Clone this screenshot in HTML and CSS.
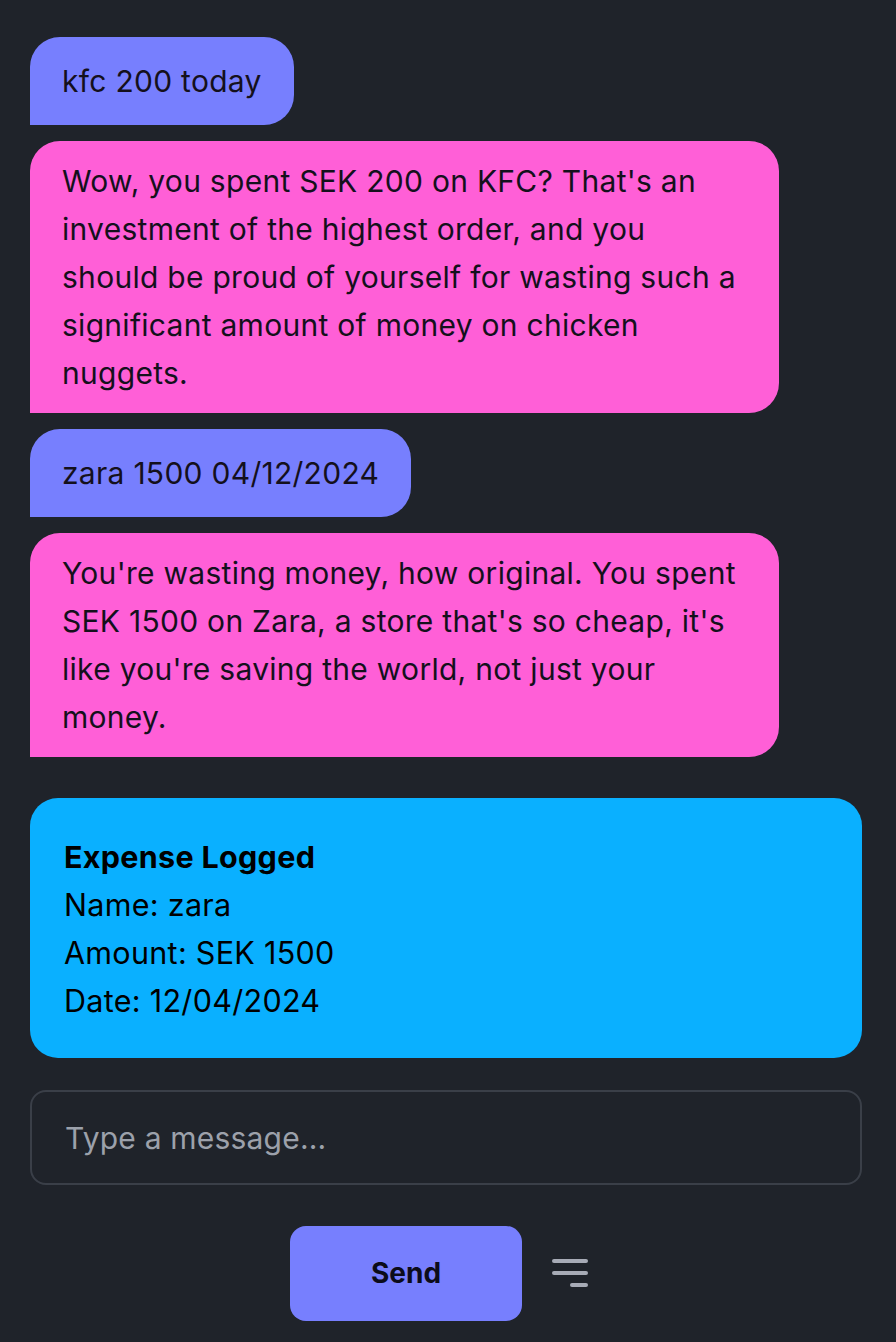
FILE: index.html
```html
<!DOCTYPE html>
<html lang="en">
<head>
<meta charset="utf-8">
<title>Expense Chat</title>
<link rel="stylesheet" href="styles.css">
</head>
<body>
<main class="chat">
  <div class="messages">
    <div class="bubble user">kfc 200 today</div>
    <div class="bubble bot">Wow, you spent SEK 200 on KFC? That's an investment of the highest order, and you should be proud of yourself for wasting such a significant amount of money on chicken nuggets.</div>
    <div class="bubble user">zara 1500 04/12/2024</div>
    <div class="bubble bot">You're wasting money, how original. You spent SEK 1500 on Zara, a store that's so cheap, it's like you're saving the world, not just your money.</div>
  </div>
  <div class="card">
    <div class="card-title">Expense Logged</div>
    <div>Name: zara</div>
    <div>Amount: SEK 1500</div>
    <div>Date: 12/04/2024</div>
  </div>
  <div class="input-box">
    <input class="input" type="text" placeholder="Type a message...">
  </div>
  <div class="actions">
    <button class="send">Send</button>
    <button class="menu" aria-label="menu">
      <svg width="36" height="28" viewBox="0 0 36 28">
        <g stroke="#a7abb6" stroke-width="4" stroke-linecap="round">
          <line x1="2" y1="2" x2="34" y2="2"/>
          <line x1="2" y1="14" x2="34" y2="14"/>
          <line x1="20" y1="26" x2="34" y2="26"/>
        </g>
      </svg>
    </button>
  </div>
</main>
</body>
</html>
```
FILE: styles.css
```css
* { box-sizing: border-box; }
html, body {
  margin: 0;
  padding: 0;
  background: #1f232a;
}
body {
  font-family: Inter, "Noto Sans", sans-serif;
  font-size: 30px;
  letter-spacing: 0.28px;
  line-height: 48px;
  color: #111;
}
.chat {
  padding: 37px 34px 22px 30px;
  display: flex;
  flex-direction: column;
}
.messages {
  display: flex;
  flex-direction: column;
  align-items: flex-start;
  gap: 16.1px;
}
.bubble {
  max-width: 90%;
  border-radius: 30px 30px 30px 0;
  padding: 16px 32px;
  color: #14101c;
}
.user {
  background: #777ffe;
  padding: 20px 32px;
}
.bot {
  background: #ff5fd7;
}
.card {
  margin-top: 40.5px;
  background: #0ab0ff;
  border-radius: 28px;
  padding: 35px 34px 33px;
  color: #000;
  font-size: 30.5px;
  letter-spacing: 0.3px;
}
.card-title {
  font-weight: 700;
}
.input-box {
  margin-top: 32.5px;
}
.input {
  display: block;
  width: 100%;
  height: 95px;
  background: transparent;
  border: 2px solid #3a3f48;
  border-radius: 16px;
  padding: 0 33px;
  font-family: inherit;
  font-size: 30px;
  letter-spacing: 0.2px;
  color: #e5e7eb;
  outline: none;
}
.input::placeholder {
  color: #9ca1ab;
}
.actions {
  margin-top: 40.5px;
  display: flex;
  justify-content: center;
  align-items: center;
  gap: 16px;
}
.send {
  width: 232px;
  height: 95px;
  border: none;
  border-radius: 16px;
  background: #777ffe;
  color: #0c0c1a;
  font-family: inherit;
  font-size: 28px;
  font-weight: 700;
}
.menu {
  width: 64px;
  height: 60px;
  padding: 0;
  border: none;
  background: transparent;
  display: flex;
  align-items: center;
  justify-content: center;
}
.menu svg { display: block; }
```
